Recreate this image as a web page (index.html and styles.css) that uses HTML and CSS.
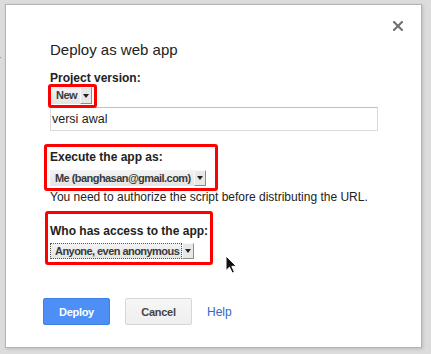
FILE: index.html
```html
<!DOCTYPE html>
<html lang="en">
<head>
  <meta charset="UTF-8" />
  <title>Deploy as web app</title>
  <link rel="stylesheet" href="styles.css">
</head>
<body>
  <div class="peek">r</div>

  <div class="dialog">
    <span class="close">
      <svg width="10" height="10" viewBox="0 0 10 10"><path d="M1 1 L9 9 M9 1 L1 9" stroke="#6f6f6f" stroke-width="2" stroke-linecap="square"/></svg>
    </span>
    <h1 class="title">Deploy as web app</h1>

    <div class="label">Project version:</div>
    <div class="mark mark-version">
      <div class="sel sel-tall"><span class="sel-text">New</span><span class="sel-btn"></span></div>
    </div>
    <div class="text-input">versi awal</div>

    <div class="mark mark-exec">
      <div class="label">Execute the app as:</div>
      <div class="sel"><span class="sel-text">Me (banghasan@gmail.com)</span><span class="sel-btn"></span></div>
    </div>
    <div class="hint">You need to authorize the script before distributing the URL.</div>

    <div class="mark mark-access">
      <div class="label">Who has access to the app:</div>
      <div class="sel"><span class="sel-text focus">Anyone, even anonymous</span><span class="sel-btn"></span></div>
    </div>

    <div class="buttons">
      <button class="btn btn-blue">Deploy</button>
      <button class="btn">Cancel</button>
      <a class="help" href="#">Help</a>
    </div>
  </div>

  <!-- mouse pointer -->
  <svg class="cursor" width="13" height="19" viewBox="0 0 13 19">
    <path d="M1 1 L1 15.5 L4.5 12.2 L7.2 18 L9.4 17 L6.8 11.3 L11.3 11.3 Z" fill="#111" stroke="#fff" stroke-width="1"/>
  </svg>
</body>
</html>
```

FILE: styles.css
```css
* { box-sizing: border-box; }
body {
  margin: 0;
  background: #dcdcdc;
  font-family: 'Liberation Sans', Arial, sans-serif;
  color: #222;
  position: relative;
  height: 354px;
  overflow: hidden;
}
.peek {
  position: absolute;
  left: -3px; top: 52px;
  font-size: 13px;
  color: #b8915f;
}

.dialog {
  position: relative;
  margin: 4px 0 0 5px;
  width: 417px; height: 344px;
  background: #fff;
  border: 1px solid #b4b4b4;
  box-shadow: 1px 1px 3px rgba(0,0,0,0.15);
  padding: 35px 0 0 44px;
}
.close {
  position: absolute;
  top: 16px; right: 18px;
  width: 10px; height: 10px;
  display: flex;
}
.title {
  margin: 0;
  font-size: 15px; line-height: 20px;
  font-weight: normal;
  color: #222;
}
.label {
  font-size: 12px; line-height: 15px;
  font-weight: bold;
  color: #222;
}
.title + .label { margin-top: 11px; }

/* red highlight boxes */
.mark {
  position: relative;
  z-index: 1;
  width: fit-content;
  border: 3px solid #f00;
  border-radius: 3px;
}
.mark-version { margin: -2px 0 0 -2px; padding: 0 2px 1px 0; }
.mark-exec { margin: 13px 0 0 -6px; padding: 3px 9px 2px 3px; }
.mark-exec .sel { margin-top: 5px; }
.mark-access { margin: 6px 0 0 -5px; padding: 10px 2px 3px 2px; }
.mark-access .sel { margin-top: 4px; }

/* select look-alike */
.sel {
  display: flex;
  width: fit-content;
  height: 16px;
  background: linear-gradient(#f4f4f4, #e4e4e4);
  font-size: 11px; line-height: 16px;
  font-weight: bold;
  letter-spacing: -0.55px;
  color: #3a3a3a;
}
.sel-tall { height: 17px; line-height: 17px; }
.sel-text { padding: 0 3px 0 5px; }
.sel-text.focus { outline: 1px dotted #555; outline-offset: -1px; }
.sel-btn {
  width: 12px;
  background: #e8e8e8;
  border-top: 1px solid #fafafa;
  border-left: 1px solid #fafafa;
  border-right: 1px solid #8d8d8d;
  border-bottom: 1px solid #8d8d8d;
  display: flex; justify-content: center; align-items: center;
}
.sel-btn::after {
  content: "";
  border-top: 4px solid #222;
  border-left: 3px solid transparent;
  border-right: 3px solid transparent;
}

.text-input {
  margin-top: -1px;
  width: 328px; height: 24px;
  border: 1px solid #dadada;
  border-top-color: #c0c0c0;
  padding: 0 1px;
  font-size: 12.5px; line-height: 22px;
  color: #222;
}
.hint {
  margin-top: -1px;
  font-size: 12px; line-height: 15px;
  color: #222;
}

.buttons {
  display: flex;
  align-items: center;
  gap: 15px;
  margin: 33px 0 0 -7px;
}
.btn {
  width: 67px; height: 27px;
  border: 1px solid #d6d6d6;
  border-radius: 2px;
  background: linear-gradient(#f6f6f6, #efefef);
  font-family: inherit;
  font-size: 11px; font-weight: bold;
  letter-spacing: -0.3px;
  color: #444;
  padding: 0;
}
.btn-blue {
  background: #4d8ff5;
  border-color: #3f7fe6;
  color: #fff;
}
.help {
  font-size: 12px;
  color: #3568c9;
  text-decoration: none;
}

.cursor {
  position: absolute;
  left: 225px; top: 255px;
}
```
